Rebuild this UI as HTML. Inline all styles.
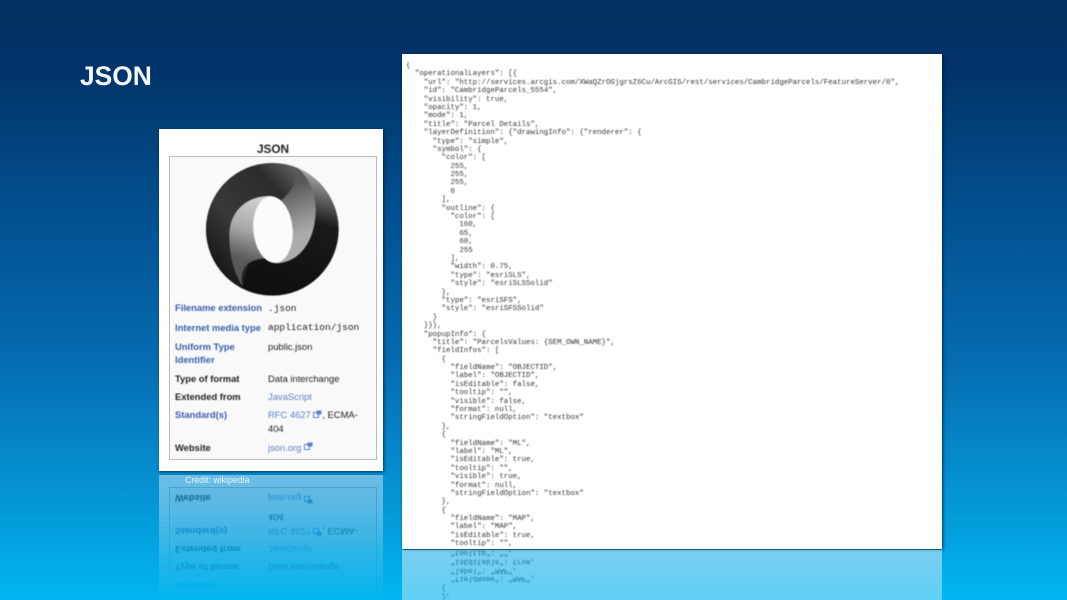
<!DOCTYPE html>
<html><head><meta charset="utf-8"><style>
html,body{margin:0;padding:0;width:1067px;height:600px;overflow:hidden}
#s{width:1067px;height:600px;overflow:hidden;position:relative;font-family:"Liberation Sans",sans-serif;background:linear-gradient(180deg,#02305f 0,#02346a 12%,#02508f 35%,#056cb0 60%,#0595d6 83%,#00b6f0 100%)}
.abs{position:absolute}
h1{position:absolute;left:80px;top:61px;margin:0;font-size:26.4px;line-height:30px;font-weight:bold;color:#f4f9fd}
.json{width:540px;height:495px;background:#fff;box-shadow:1px 1px 3px rgba(0,20,50,.75)}
.json pre{position:absolute;left:4px;top:8px;margin:0;font:7.42px/8.39px "Liberation Mono",monospace;color:#333;filter:blur(.4px)}
.card{width:224px;height:342px;background:#fff;box-shadow:1px 1px 3px rgba(0,20,50,.7)}
.box{position:absolute;left:10px;top:27px;width:206px;height:302px;border:1px solid #bbb;background:#f9f9f9}
.card .t{position:absolute;filter:blur(.4px);white-space:nowrap;font-size:9.4px;line-height:13px;color:#222}
.card .t.b{font-weight:bold}.card .t.l{color:#3a5cab}.card .t.v,.v{color:#5f80c6}
.card .t.m{font-family:"Liberation Mono",monospace;font-size:9.5px}
.card .t.ttl{left:0;width:228px;top:14px;text-align:center;font-size:11.8px;font-weight:bold}
.rf{position:absolute;overflow:hidden}
.rf>div{position:absolute;left:0;top:0}
.credit{position:absolute;left:185px;top:474px;font-size:8.8px;line-height:12px;color:#e8f5fc}
</style></head><body><div id="s">
<h1>JSON</h1>

<div class="abs card" style="left:159px;top:129px">
<div class="box"></div>
<div class="t ttl b">JSON</div>
<svg class="abs" style="left:-9px;top:-9px;filter:blur(.5px)" width="240" height="180" viewBox="0 0 720 540">
<defs>
<linearGradient id="g1" gradientUnits="userSpaceOnUse" x1="170" y1="420" x2="460" y2="150"><stop offset="0" stop-color="#161616"/><stop offset=".35" stop-color="#383838"/><stop offset=".75" stop-color="#2c2c2c"/><stop offset="1" stop-color="#666"/></linearGradient>
<linearGradient id="g2" gradientUnits="userSpaceOnUse" x1="490" y1="170" x2="400" y2="480"><stop offset="0" stop-color="#9a9a9a"/><stop offset=".4" stop-color="#1a1a1a"/><stop offset="1" stop-color="#101010"/></linearGradient>
<linearGradient id="g3" gradientUnits="userSpaceOnUse" x1="340" y1="230" x2="260" y2="490"><stop offset="0" stop-color="#d4d4d4"/><stop offset=".4" stop-color="#a8a8a8"/><stop offset=".72" stop-color="#5a5a5a"/><stop offset="1" stop-color="#555"/></linearGradient>
<linearGradient id="g4" gradientUnits="userSpaceOnUse" x1="410" y1="200" x2="460" y2="340"><stop offset="0" stop-color="#585858"/><stop offset="1" stop-color="#ababab"/></linearGradient>
<clipPath id="c"><circle cx="367" cy="328" r="199"/></clipPath>
</defs>
<g clip-path="url(#c)">
<rect x="150" y="110" width="440" height="440" fill="url(#g2)"/>
<path d="M150 110H440V142C478 172 497 220 497 270C440 260 420 240 395 240C350 240 300 300 300 420C290 450 280 475 278 505L150 540Z" fill="url(#g1)"/>
<path d="M365 228C290 225 238 275 238 345C238 405 250 455 278 500C268 450 285 420 345 415L368 328Z" fill="url(#g3)"/>
<path d="M440 142C478 172 497 220 497 270C497 360 450 430 375 430L368 328L395 240C430 210 445 175 440 142Z" fill="url(#g4)"/>
</g>
<ellipse cx="369" cy="329" rx="59" ry="100" transform="rotate(-5 369 329)" fill="#fbfbfb"/>
</svg>
<div class="t b l" style="left:16px;top:172px">Filename extension</div><div class="t m" style="left:109px;top:173px">.json</div>
<div class="t b l" style="left:16px;top:192px">Internet media type</div><div class="t m" style="left:109px;top:192px">application/json</div>
<div class="t b l" style="left:16px;top:211px">Uniform Type</div><div class="t" style="left:109px;top:211px">public.json</div>
<div class="t b l" style="left:16px;top:224px">Identifier</div>
<div class="t b" style="left:16px;top:243px">Type of format</div><div class="t" style="left:109px;top:243px">Data interchange</div>
<div class="t b" style="left:16px;top:261px">Extended from</div><div class="t v" style="left:109px;top:261px">JavaScript</div>
<div class="t b l" style="left:16px;top:279px">Standard(s)</div><div class="t" style="left:109px;top:279px"><span class="v">RFC 4627</span> <svg width="9" height="9" viewBox="0 0 9 9" style="vertical-align:-1px"><rect x=".5" y="2.5" width="5" height="5" fill="none" stroke="#5f80c6"/><rect x="3.5" y=".5" width="5" height="4" fill="#5f80c6"/></svg>, ECMA-</div>
<div class="t" style="left:109px;top:293px">404</div>
<div class="t b" style="left:16px;top:312px">Website</div><div class="t" style="left:109px;top:312px"><span class="v">json.org</span> <svg width="9" height="9" viewBox="0 0 9 9"><rect x=".5" y="2.5" width="5" height="5" fill="none" stroke="#5f80c6"/><rect x="3.5" y=".5" width="5" height="4" fill="#5f80c6"/></svg></div>
</div>

<div class="rf" style="left:159px;top:475px;width:224px;height:125px;-webkit-mask-image:linear-gradient(rgba(0,0,0,.42),rgba(0,0,0,.32) 30%,rgba(0,0,0,0) 100%);mask-image:linear-gradient(rgba(0,0,0,.42),rgba(0,0,0,.32) 30%,rgba(0,0,0,0) 100%)">
<div class="card" style="box-shadow:none;height:125px;overflow:hidden;transform:scaleY(-1);filter:blur(.3px)">
<div class="box" style="top:0;height:112px;border-top:0"></div>
<div class="t b l" style="left:16px;top:7px">Identifier</div>
<div class="t b" style="left:16px;top:26px">Type of format</div><div class="t" style="left:109px;top:26px">Data interchange</div>
<div class="t b" style="left:16px;top:44px">Extended from</div><div class="t v" style="left:109px;top:44px">JavaScript</div>
<div class="t b l" style="left:16px;top:62px">Standard(s)</div><div class="t" style="left:109px;top:62px"><span class="v">RFC 4627</span> <svg width="9" height="9" viewBox="0 0 9 9" style="vertical-align:-1px"><rect x=".5" y="2.5" width="5" height="5" fill="none" stroke="#5f80c6"/><rect x="3.5" y=".5" width="5" height="4" fill="#5f80c6"/></svg>, ECMA-</div>
<div class="t" style="left:109px;top:76px">404</div>
<div class="t b" style="left:16px;top:95px">Website</div><div class="t" style="left:109px;top:95px"><span class="v">json.org</span> <svg width="9" height="9" viewBox="0 0 9 9"><rect x=".5" y="2.5" width="5" height="5" fill="none" stroke="#5f80c6"/><rect x="3.5" y=".5" width="5" height="4" fill="#5f80c6"/></svg></div>
</div></div>
<div class="credit">Credit: wikipedia</div>

<div class="abs json" style="left:402px;top:54px">
<pre>{
  "operationalLayers": [{
    "url": "http://services.arcgis.com/XWaQZrOGjgrsZ6Cu/ArcGIS/rest/services/CambridgeParcels/FeatureServer/0",
    "id": "CambridgeParcels_5554",
    "visibility": true,
    "opacity": 1,
    "mode": 1,
    "title": "Parcel Details",
    "layerDefinition": {"drawingInfo": {"renderer": {
      "type": "simple",
      "symbol": {
        "color": [
          255,
          255,
          255,
          0
        ],
        "outline": {
          "color": [
            160,
            65,
            60,
            255
          ],
          "width": 0.75,
          "type": "esriSLS",
          "style": "esriSLSSolid"
        },
        "type": "esriSFS",
        "style": "esriSFSSolid"
      }
    }}},
    "popupInfo": {
      "title": "ParcelsValues: {SEM_OWN_NAME}",
      "fieldInfos": [
        {
          "fieldName": "OBJECTID",
          "label": "OBJECTID",
          "isEditable": false,
          "tooltip": "",
          "visible": false,
          "format": null,
          "stringFieldOption": "textbox"
        },
        {
          "fieldName": "ML",
          "label": "ML",
          "isEditable": true,
          "tooltip": "",
          "visible": true,
          "format": null,
          "stringFieldOption": "textbox"
        },
        {
          "fieldName": "MAP",
          "label": "MAP",
          "isEditable": true,
          "tooltip": "",</pre>
</div>

<div class="rf" style="left:402px;top:550px;width:540px;height:50px;-webkit-mask-image:linear-gradient(rgba(0,0,0,.47),rgba(0,0,0,.37));mask-image:linear-gradient(rgba(0,0,0,.47),rgba(0,0,0,.37))">
<div class="json" style="box-shadow:none;height:50px;overflow:hidden;transform:scaleY(-1)">
<pre style="top:0;line-height:8.8px">        },
        {
          "fieldName": "MAP",
          "label": "MAP",
          "isEditable": true,
          "tooltip": "",</pre>
</div></div>
</div></body></html>
